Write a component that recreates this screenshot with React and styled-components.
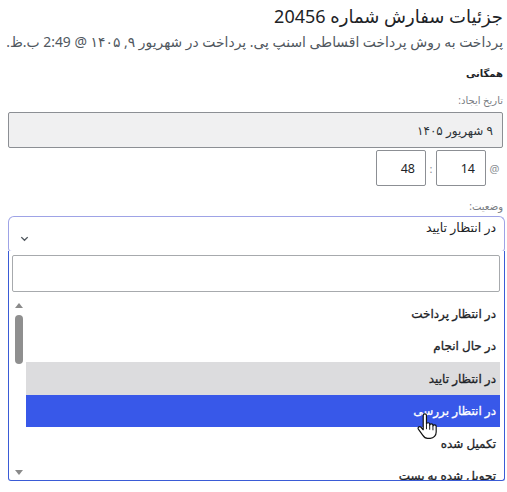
import React from "react";
import styled, { createGlobalStyle } from "styled-components";

const GlobalStyle = createGlobalStyle`
  html, body { margin: 0; padding: 0; background: #fff; }
  body {
    direction: rtl;
    font-family: "Noto Sans", "DejaVu Sans", sans-serif;
    color: #1d2327;
    overflow: hidden;
  }
  * { box-sizing: border-box; }
`;

const Page = styled.div`
  position: relative;
  width: 507px;
  height: 492px;
  padding: 2px 4px 0 8px;
  overflow: hidden;
`;

const Title = styled.h2`
  margin: 0;
  font-size: 18px;
  font-weight: 400;
  line-height: 28px;
  color: #1d2327;
  white-space: nowrap;
`;

const Subtitle = styled.p`
  margin: 0 0 0 -8px;
  font-size: 13.9px;
  line-height: 24px;
  color: #50575e;
  white-space: nowrap;
`;

const SectionHead = styled.h3`
  margin: 11px 0 0;
  font-size: 10px;
  font-weight: 700;
  line-height: 16px;
  color: #1d2327;
`;

const Label = styled.label`
  display: block;
  margin-top: ${(p) => p.$mt || 10}px;
  font-size: 10px;
  line-height: 16px;
  color: #787c82;
`;

const DateBox = styled.div`
  margin-top: 4px;
  height: 36px;
  border: 1px solid #8c8f94;
  background: #f0f0f1;
  border-radius: 2px;
  display: flex;
  align-items: center;
  padding: 0 9px;
  font-size: 12px;
  color: #2c3338;
`;

const TimeRow = styled.div`
  margin-top: 2px;
  display: flex;
  align-items: center;
  height: 36px;
`;

const At = styled.span`
  font-size: 11px;
  color: #8c8f94;
  width: 17px;
  text-align: center;
`;

const Colon = styled.span`
  font-size: 11px;
  color: #8c8f94;
  width: 10px;
  text-align: center;
`;

const TimeBox = styled.div`
  width: 50px;
  height: 36px;
  border: 1px solid #8c8f94;
  border-radius: 2px;
  background: #fff;
  display: flex;
  align-items: center;
  justify-content: flex-start;
  padding: 0 10px;
  font-size: 12.5px;
  color: #1d2327;
`;

const SelectWrap = styled.div`
  position: relative;
  margin-top: 2px;
  margin-right: -2px;
`;

const SelectBox = styled.div`
  height: 36px;
  border: 1.5px solid #9ea3e6;
  border-bottom-color: #b9bdf0;
  border-radius: 6px 6px 4px 4px;
  background: #fff;
  display: flex;
  justify-content: space-between;
  padding: 2px 8px 0 10px;
  font-size: 12.5px;
  color: #1d2327;
`;

const SelectText = styled.span`
  line-height: 18px;
`;

const Chevron = styled.svg`
  align-self: center;
  margin-top: 6px;
  width: 11px;
  height: 11px;
`;

const Dropdown = styled.div`
  position: absolute;
  top: 35px;
  right: 0;
  left: 0;
  height: 230px;
  border: 1.5px solid #3a5bd6;
  border-top: none;
  border-radius: 0 0 3px 3px;
  background: #fff;
  display: flex;
  flex-direction: column;
  padding: 4px 4px 0 3px;
`;

const Search = styled.div`
  height: 37px;
  border: 1px solid #a7aaad;
  border-radius: 2px;
  background: #fff;
  flex: none;
`;

const ListArea = styled.div`
  flex: 1;
  display: flex;
  margin-top: 5px;
  overflow: hidden;
`;

const Options = styled.ul`
  list-style: none;
  margin: 0;
  padding: 0;
  flex: 1;
`;

const Option = styled.li`
  height: 32.5px;
  display: flex;
  align-items: center;
  padding: 0 4px;
  font-size: 12px;
  font-weight: 400;
  -webkit-text-stroke: 0.3px currentColor;
  color: ${(p) => (p.$active ? "#ffffff" : "#1d2327")};
  background: ${(p) =>
    p.$active ? "#3858e9" : p.$selected ? "#dcdcde" : "transparent"};
  white-space: nowrap;
`;

const Scrollbar = styled.div`
  width: 14px;
  flex: none;
  display: flex;
  flex-direction: column;
  align-items: center;
  padding: 6px 0 5px;
`;

const Arrow = styled.div`
  width: 0;
  height: 0;
  border-left: 4px solid transparent;
  border-right: 4px solid transparent;
  ${(p) =>
    p.$down
      ? "border-top: 5px solid #8a8a8a; margin-top: auto;"
      : "border-bottom: 5px solid #8a8a8a;"}
`;

const Thumb = styled.div`
  margin-top: 7px;
  width: 8px;
  height: 49px;
  border-radius: 4px;
  background: #8f8f8f;
`;

const Cursor = styled.svg`
  position: absolute;
  left: 416px;
  top: 413px;
  width: 22px;
  height: 27px;
  pointer-events: none;
`;

const options = [
  { label: "در انتظار پرداخت" },
  { label: "در حال انجام" },
  { label: "در انتظار تایید", selected: true },
  { label: "در انتظار بررسی", active: true },
  { label: "تکمیل شده" },
  { label: "تحویل شده به پست" },
];

export default function App() {
  return (
    <>
      <GlobalStyle />
      <Page>
        <Title>جزئیات سفارش شماره 20456</Title>
        <Subtitle>
          پرداخت به روش پرداخت اقساطی اسنپ پی. پرداخت در شهریور ۹, ۱۴۰۵ @ 2:49 ب.ظ.
        </Subtitle>
        <SectionHead>همگانی</SectionHead>
        <Label $mt={11}>تاریخ ایجاد:</Label>
        <DateBox>۹ شهریور ۱۴۰۵</DateBox>
        <TimeRow>
          <At>@</At>
          <TimeBox>14</TimeBox>
          <Colon>:</Colon>
          <TimeBox>48</TimeBox>
        </TimeRow>
        <Label $mt={12}>وضعیت:</Label>
        <SelectWrap>
          <SelectBox>
            <SelectText>در انتظار تایید</SelectText>
            <Chevron viewBox="0 0 12 12">
              <path
                d="M2.5 4.5 L6 8 L9.5 4.5"
                fill="none"
                stroke="#50575e"
                strokeWidth="1.5"
              />
            </Chevron>
          </SelectBox>
          <Dropdown>
            <Search />
            <ListArea>
              <Options>
                {options.map((o) => (
                  <Option key={o.label} $active={o.active} $selected={o.selected}>
                    {o.label}
                  </Option>
                ))}
              </Options>
              <Scrollbar>
                <Arrow />
                <Thumb />
                <Arrow $down />
              </Scrollbar>
            </ListArea>
          </Dropdown>
        </SelectWrap>
        <Cursor viewBox="0 0 20 25">
          <path
            d="M6.5 2.3a1.5 1.5 0 0 1 3 0V10.5a1.5 1.5 0 0 1 3 0V11.5a1.5 1.5 0 0 1 3 0V12.5a1.5 1.5 0 0 1 3 0V17.5c0 3.2-2.2 6-5.5 6H10.5c-2 0-3.2-1-4.5-3L2 15a1.5 1.5 0 0 1 2.4-1.8L6.5 15.5Z"
            fill="#fff"
            stroke="#111"
            strokeWidth="1.1"
            strokeLinejoin="round"
          />
          <path d="M9.5 11v4M12.5 12v3.5M15.5 13v3" stroke="#111" strokeWidth="0.9" />
        </Cursor>
      </Page>
    </>
  );
}
